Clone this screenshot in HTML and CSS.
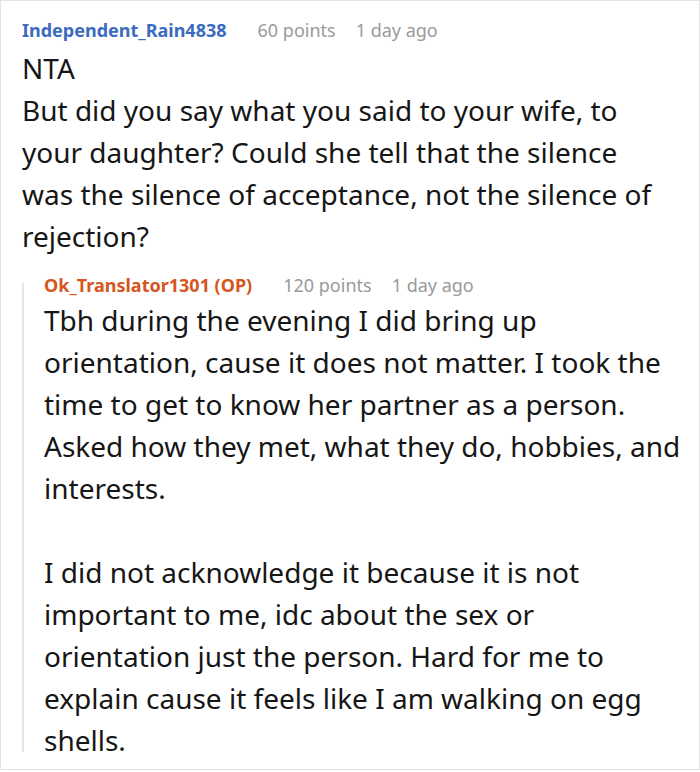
FILE: index.html
```html
<!DOCTYPE html>
<html>
<head>
<meta charset="utf-8">
<link rel="stylesheet" href="styles.css">
</head>
<body>
<div class="frame">
  <div class="comment">
    <div class="meta">
      <span class="user user-blue">Independent_Rain4838</span>
      <span class="info">60 points</span>
      <span class="info">1 day ago</span>
    </div>
    <div class="body body-top">
      <p>NTA<br>But did you say what you said to your wife, to<br>your daughter? Could she tell that the silence<br>was the silence of acceptance, not the silence of<br>rejection?</p>
    </div>
    <div class="reply">
      <div class="meta">
        <span class="user user-orange">Ok_Translator1301 (OP)</span>
        <span class="info">120 points</span>
        <span class="info">1 day ago</span>
      </div>
      <div class="body body-reply">
        <p>Tbh during the evening I did bring up<br>orientation, cause it does not matter. I took the<br>time to get to know her partner as a person.<br>Asked how they met, what they do, hobbies, and<br>interests.</p>
        <p>I did not acknowledge it because it is not<br>important to me, idc about the sex or<br>orientation just the person. Hard for me to<br>explain cause it feels like I am walking on egg<br>shells.</p>
      </div>
    </div>
  </div>
</div>
</body>
</html>
```
FILE: styles.css
```css
html, body {
  margin: 0;
  padding: 0;
  background: #fff;
}
.frame {
  width: 700px;
  height: 770px;
  box-sizing: border-box;
  border: 1px solid #e3e3e3;
  overflow: hidden;
  font-family: "Noto Sans", "Open Sans", sans-serif;
  color: #161616;
}
.comment {
  padding: 14px 0 0 21px;
}
.meta {
  display: flex;
  gap: 20px;
  align-items: baseline;
  font-size: 18px;
  line-height: 30px;
  white-space: nowrap;
}
.user {
  font-weight: 700;
  margin-right: 11px;
}
.user-blue { color: #3a6bbf; }
.user-orange { color: #d6561e; }
.info {
  color: #9a9a9a;
}
.body p {
  margin: 0;
  font-size: 28px;
  line-height: 42px;
  white-space: nowrap;
}
.body-top {
  margin-top: 2px;
}
.body-reply {
  margin-top: -1px;
}
.body-reply p + p {
  margin-top: 42px;
}
.reply {
  position: relative;
  margin-top: 13px;
  padding-left: 22px;
}
.reply::before {
  content: "";
  position: absolute;
  left: 0;
  top: 13px;
  bottom: 9px;
  width: 2px;
  background: #e6e6e6;
}
```
